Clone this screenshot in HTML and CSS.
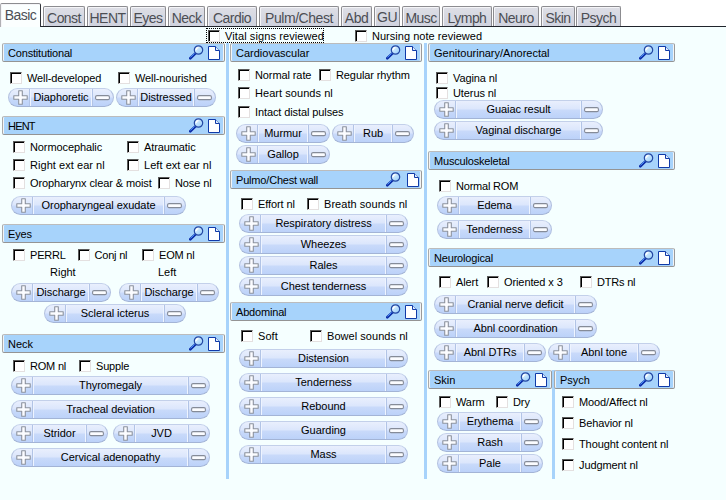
FILE: index.html
```html
<!DOCTYPE html>
<html lang="en">
<head>
<meta charset="utf-8">
<title>Physical exam</title>
<link rel="stylesheet" href="styles.css">
</head>
<body>
<svg class="defs" width="0" height="0">
  <defs>
    <linearGradient id="lens" x1="0" y1="0" x2="1" y2="1"><stop offset="0" stop-color="#f4fcff"/><stop offset="1" stop-color="#8cc8fa"/></linearGradient>
    <symbol id="find" viewBox="0 0 15 15"><path d="M1.3 13.3 6.2 8.6" stroke="#0c2ca8" stroke-width="2.6" stroke-linecap="round"/><path d="M1.5 12.4 5.6 8.4" stroke="#4a94f8" stroke-width="1"/><circle cx="9.5" cy="5" r="4.2" fill="url(#lens)" stroke="#2448a4" stroke-width="1.2"/><path d="M7.1 4.9a2.4 2.4 0 0 1 2.3-2.3" fill="none" stroke="#fff" stroke-width="1.2"/></symbol>
    <symbol id="page" viewBox="0 0 12 14"><path d="M.5.5h7l4 4v9H.5z" fill="#fff" stroke="#103aa8"/><path d="M7.5.5v4h4" fill="#dcecff" stroke="#103aa8"/></symbol>
    <symbol id="plus" viewBox="0 0 15 15"><path d="M5.7.8h3.6v4.9h4.9v3.6H9.3v4.9H5.7V9.3H.8V5.7h4.9z" fill="#fbfcff" stroke="#8c929e" stroke-width="1.1" stroke-linejoin="round"/></symbol>
    <symbol id="minus" viewBox="0 0 15 6"><rect x=".6" y=".6" width="13.8" height="4" rx="1.4" fill="#fbfcff" stroke="#858b98" stroke-width="1.1"/></symbol>
  </defs>
</svg>

<nav class="tabs">
  <a class="tab active">Basic</a><a class="tab const">Const</a><a class="tab hent">HENT</a><a class="tab eyes">Eyes</a><a class="tab neck">Neck</a><a class="tab cardio">Cardio</a><a class="tab pulm">Pulm/Chest</a><a class="tab abd">Abd</a><a class="tab gu">GU</a><a class="tab musc">Musc</a><a class="tab lymph">Lymph</a><a class="tab neuro">Neuro</a><a class="tab skin">Skin</a><a class="tab psych">Psych</a>
</nav>

<div class="review">
  <label class="check focus">Vital signs reviewed</label>
  <label class="check nursing">Nursing note reviewed</label>
</div>

<main class="exam">
  <div class="col col-a">
    <section class="s73">
      <h2 class="narrow">Constitutional<svg class="find"><use href="#find"/></svg><svg class="page"><use href="#page"/></svg></h2>
      <div class="row t10 l8 g108"><label class="check">Well-developed</label><label class="check">Well-nourished</label></div>
      <div class="row t4 l6 gap2"><div class="pill w106"><b><svg><use href="#plus"/></svg></b><span>Diaphoretic</span><b><svg><use href="#minus"/></svg></b></div><div class="pill w100"><b><svg><use href="#plus"/></svg></b><span>Distressed</span><b><svg><use href="#minus"/></svg></b></div></div>
    </section>
    <section class="s108">
      <h2 class="narrower">HENT<svg class="find"><use href="#find"/></svg><svg class="page"><use href="#page"/></svg></h2>
      <div class="row t6 l11 g114"><label class="check">Normocephalic</label><label class="check">Atraumatic</label></div>
      <div class="row t6 l11 g114"><label class="check loose">Right ext ear nl</label><label class="check loose">Left ext ear nl</label></div>
      <div class="row t6 l11 g145"><label class="check">Oropharynx clear &amp; moist</label><label class="check">Nose nl</label></div>
      <div class="row t7 l9"><div class="pill w175"><b><svg><use href="#plus"/></svg></b><span>Oropharyngeal exudate</span><b><svg><use href="#minus"/></svg></b></div></div>
    </section>
    <section class="s110">
      <h2 class="narrow">Eyes<svg class="find"><use href="#find"/></svg><svg class="page"><use href="#page"/></svg></h2>
      <div class="row t6 l11 g64"><label class="check tight">PERRL</label><label class="check tight">Conj nl</label><label class="check tight">EOM nl</label></div>
      <div class="row t5 l48 g108 sides"><span>Right</span><span>Left</span></div>
      <div class="row t5 l9 gap8"><div class="pill w100"><b><svg><use href="#plus"/></svg></b><span>Discharge</span><b><svg><use href="#minus"/></svg></b></div><div class="pill w100"><b><svg><use href="#plus"/></svg></b><span>Discharge</span><b><svg><use href="#minus"/></svg></b></div></div>
      <div class="row t2 l42"><div class="pill w142"><b><svg><use href="#plus"/></svg></b><span>Scleral icterus</span><b><svg><use href="#minus"/></svg></b></div></div>
    </section>
    <section>
      <h2>Neck<svg class="find"><use href="#find"/></svg><svg class="page"><use href="#page"/></svg></h2>
      <div class="row t7 l11 g66"><label class="check tight">ROM nl</label><label class="check tight">Supple</label></div>
      <div class="row t4 l9"><div class="pill w199"><b><svg><use href="#plus"/></svg></b><span>Thyromegaly</span><b><svg><use href="#minus"/></svg></b></div></div>
      <div class="row t5 l9"><div class="pill w199"><b><svg><use href="#plus"/></svg></b><span>Tracheal deviation</span><b><svg><use href="#minus"/></svg></b></div></div>
      <div class="row t5 l9 gap5"><div class="pill w97"><b><svg><use href="#plus"/></svg></b><span>Stridor</span><b><svg><use href="#minus"/></svg></b></div><div class="pill w97"><b><svg><use href="#plus"/></svg></b><span>JVD</span><b><svg><use href="#minus"/></svg></b></div></div>
      <div class="row t5 l9"><div class="pill w199"><b><svg><use href="#plus"/></svg></b><span>Cervical adenopathy</span><b><svg><use href="#minus"/></svg></b></div></div>
    </section>
  </div>

  <div class="col col-b">
    <section class="s127">
      <h2>Cardiovascular<svg class="find"><use href="#find"/></svg><svg class="page"><use href="#page"/></svg></h2>
      <div class="row t7 l8 g81"><label class="check">Normal rate</label><label class="check">Regular rhythm</label></div>
      <div class="row t6 l8"><label class="check loose">Heart sounds nl</label></div>
      <div class="row t7 l8"><label class="check">Intact distal pulses</label></div>
      <div class="row t6 l6 gap2"><div class="pill w94"><b><svg><use href="#plus"/></svg></b><span>Murmur</span><b><svg><use href="#minus"/></svg></b></div><div class="pill w82"><b><svg><use href="#plus"/></svg></b><span>Rub</span><b><svg><use href="#minus"/></svg></b></div></div>
      <div class="row t2 l6"><div class="pill w94"><b><svg><use href="#plus"/></svg></b><span>Gallop</span><b><svg><use href="#minus"/></svg></b></div></div>
    </section>
    <section class="s132">
      <h2 class="shifted narrow">Pulmo/Chest wall<svg class="find"><use href="#find"/></svg><svg class="page"><use href="#page"/></svg></h2>
      <div class="row t9 l11 g66"><label class="check">Effort nl</label><label class="check loose">Breath sounds nl</label></div>
      <div class="row t4 l9"><div class="pill w169"><b><svg><use href="#plus"/></svg></b><span>Respiratory distress</span><b><svg><use href="#minus"/></svg></b></div></div>
      <div class="row t2 l9"><div class="pill w169"><b><svg><use href="#plus"/></svg></b><span>Wheezes</span><b><svg><use href="#minus"/></svg></b></div></div>
      <div class="row t2 l9"><div class="pill w169"><b><svg><use href="#plus"/></svg></b><span>Rales</span><b><svg><use href="#minus"/></svg></b></div></div>
      <div class="row t2 l9"><div class="pill w169"><b><svg><use href="#plus"/></svg></b><span>Chest tenderness</span><b><svg><use href="#minus"/></svg></b></div></div>
    </section>
    <section>
      <h2 class="narrow">Abdominal<svg class="find"><use href="#find"/></svg><svg class="page"><use href="#page"/></svg></h2>
      <div class="row t9 l11 g69"><label class="check loose">Soft</label><label class="check loose">Bowel sounds nl</label></div>
      <div class="row t7 l9"><div class="pill w169"><b><svg><use href="#plus"/></svg></b><span>Distension</span><b><svg><use href="#minus"/></svg></b></div></div>
      <div class="row t5 l9"><div class="pill w169"><b><svg><use href="#plus"/></svg></b><span>Tenderness</span><b><svg><use href="#minus"/></svg></b></div></div>
      <div class="row t5 l9"><div class="pill w169"><b><svg><use href="#plus"/></svg></b><span>Rebound</span><b><svg><use href="#minus"/></svg></b></div></div>
      <div class="row t5 l9"><div class="pill w169"><b><svg><use href="#plus"/></svg></b><span>Guarding</span><b><svg><use href="#minus"/></svg></b></div></div>
      <div class="row t5 l9"><div class="pill w169"><b><svg><use href="#plus"/></svg></b><span>Mass</span><b><svg><use href="#minus"/></svg></b></div></div>
    </section>
  </div>

  <div class="col col-c">
    <section class="s108">
      <h2>Genitourinary/Anorectal<svg class="find"><use href="#find"/></svg><svg class="page"><use href="#page"/></svg></h2>
      <div class="row t10 l8"><label class="check">Vagina nl</label></div>
      <div class="row t3 l8"><label class="check">Uterus nl</label></div>
      <div class="row t1 l6"><div class="pill w169"><b><svg><use href="#plus"/></svg></b><span>Guaiac result</span><b><svg><use href="#minus"/></svg></b></div></div>
      <div class="row t2 l6"><div class="pill w169"><b><svg><use href="#plus"/></svg></b><span>Vaginal discharge</span><b><svg><use href="#minus"/></svg></b></div></div>
    </section>
    <section class="s97">
      <h2 class="narrow">Musculoskeletal<svg class="find"><use href="#find"/></svg><svg class="page"><use href="#page"/></svg></h2>
      <div class="row t10 l11"><label class="check tight">Normal ROM</label></div>
      <div class="row t4 l9"><div class="pill w115"><b><svg><use href="#plus"/></svg></b><span>Edema</span><b><svg><use href="#minus"/></svg></b></div></div>
      <div class="row t5 l9"><div class="pill w115"><b><svg><use href="#plus"/></svg></b><span>Tenderness</span><b><svg><use href="#minus"/></svg></b></div></div>
    </section>
    <section class="s122">
      <h2 class="narrow">Neurological<svg class="find"><use href="#find"/></svg><svg class="page"><use href="#page"/></svg></h2>
      <div class="row t9 l11 neuro-checks"><label class="check">Alert</label><label class="check">Oriented x 3</label><label class="check tight">DTRs nl</label></div>
      <div class="row t7 l6"><div class="pill w163"><b><svg><use href="#plus"/></svg></b><span>Cranial nerve deficit</span><b><svg><use href="#minus"/></svg></b></div></div>
      <div class="row t5 l6"><div class="pill w163"><b><svg><use href="#plus"/></svg></b><span>Abnl coordination</span><b><svg><use href="#minus"/></svg></b></div></div>
      <div class="row t5 l6 gap2"><div class="pill w112"><b><svg><use href="#plus"/></svg></b><span>Abnl DTRs</span><b><svg><use href="#minus"/></svg></b></div><div class="pill w112"><b><svg><use href="#plus"/></svg></b><span>Abnl tone</span><b><svg><use href="#minus"/></svg></b></div></div>
    </section>
    <div class="pair">
      <section class="skin-exam">
        <h2>Skin<svg class="find"><use href="#find"/></svg><svg class="page"><use href="#page"/></svg></h2>
        <div class="row t7 l11 g57"><label class="check">Warm</label><label class="check">Dry</label></div>
        <div class="row t4 l9"><div class="pill w106"><b><svg><use href="#plus"/></svg></b><span>Erythema</span><b><svg><use href="#minus"/></svg></b></div></div>
        <div class="row t2 l9"><div class="pill w106"><b><svg><use href="#plus"/></svg></b><span>Rash</span><b><svg><use href="#minus"/></svg></b></div></div>
        <div class="row t2 l9"><div class="pill w106"><b><svg><use href="#plus"/></svg></b><span>Pale</span><b><svg><use href="#minus"/></svg></b></div></div>
      </section>
      <section class="psych-exam">
        <h2>Psych<svg class="find"><use href="#find"/></svg><svg class="page"><use href="#page"/></svg></h2>
        <div class="row t7 l8"><label class="check">Mood/Affect nl</label></div>
        <div class="row t9 l8"><label class="check">Behavior nl</label></div>
        <div class="row t9 l8"><label class="check">Thought content nl</label></div>
        <div class="row t9 l8"><label class="check">Judgment nl</label></div>
      </section>
    </div>
  </div>
</main>
</body>
</html>
```

FILE: styles.css
```css
*, *::before { box-sizing: border-box; }
body {
  margin: 0;
  width: 726px;
  height: 500px;
  overflow: hidden;
  background: #f5ffff;
  color: #000;
  font: 11px/12px "Liberation Sans", Arial, sans-serif;
}
.defs { display: block; }
svg { display: block; flex: none; }

/* Tab strip */
.tabs {
  display: flex;
  align-items: flex-end;
  height: 27px;
  background: #fff;
  border-bottom: 1px solid #20242c;
}
.tab {
  height: 20px;
  padding-top: 3px;
  border: 1px solid #8c8c90;
  border-bottom: 0;
  border-radius: 2px 2px 0 0;
  box-shadow: inset 1px 1px 0 #f5f5f8;
  background: linear-gradient(#dedfe6, #cfd2de);
  color: #4c4e54;
  font-size: 14px;
  line-height: 16px;
  letter-spacing: -.55px;
  text-align: center;
  white-space: nowrap;
}
.tab.active {
  width: 41px;
  height: 24px;
  margin-bottom: -1px;
  background: #fbffff;
  border-color: #8c8c90 #303238 transparent #b0b0b4;
}
.const { width: 42px; margin-left: 2px; }
.hent { width: 41px; margin-left: 2px; }
.eyes { width: 36px; margin-left: 2px; }
.neck { width: 37px; margin-left: 2px; }
.cardio { width: 50px; margin-left: 2px; }
.pulm { width: 80px; margin-left: 2px; letter-spacing: -.45px; }
.abd { width: 31px; margin-left: 2px; }
.gu { width: 26px; margin-left: 2px; padding-top: 2px; }
.musc { width: 38px; margin-left: 2px; }
.lymph { width: 50px; margin-left: 2px; }
.neuro { width: 46px; margin-left: 1px; }
.skin { width: 34px; margin-left: 2px; }
.psych { width: 45px; margin-left: 1px; }

/* Review line */
.review { display: flex; height: 16px; padding: 1px 0 0 206px; }
.review .check { height: 15px; padding-top: 2px; letter-spacing: .03px; }
.review .focus { width: 118px; padding: 1px; border: 1px dotted #000; letter-spacing: .1px; }
.review .nursing { margin-left: 31px; }

/* Check boxes */
.check {
  display: flex;
  height: 12px;
  white-space: nowrap;
  letter-spacing: -.1px;
}
.check::before {
  content: "";
  flex: none;
  width: 12px;
  height: 12px;
  margin-right: 5px;
  background: #fff;
  border: 1px solid;
  border-color: #5a5a5a #e4e0e0 #e4e0e0 #5a5a5a;
  box-shadow: inset 1px 1px 0 #000;
}
.check.tight { letter-spacing: -.2px; }
.check.loose { letter-spacing: .05px; }

/* Columns */
.exam { display: flex; height: 436px; }
.col { height: 436px; }
.col-a { width: 229px; padding-left: 2px; border-right: 3px solid #a7d3fb; }
.col-a h2 { width: 223px; }
.col-b { width: 198px; padding-left: 1px; border-right: 3px solid #a7d3fb; }
.col-b h2 { width: 192px; }
.col-c { width: 249px; padding-left: 1px; }
.col-c h2 { width: 247px; }
.pair { display: flex; height: 109px; }
.skin-exam { width: 127px; border-right: 3px solid #a7d3fb; }
.col-c .skin-exam h2 { width: 124px; }
.psych-exam { width: 121px; margin-left: -1px; }
.col-c .psych-exam h2 { width: 121px; }
.s73 { height: 73px; }
.s97 { height: 97px; }
.s108 { height: 108px; }
.s110 { height: 110px; }
.s122 { height: 122px; }
.s127 { height: 127px; }
.s132 { height: 132px; }

/* Section headings */
h2 {
  display: flex;
  height: 19px;
  margin: 0;
  padding: 3px 3px 0 5px;
  border: 1px solid;
  border-color: #bcbcbc #9a9a9a #949494 #aaa;
  border-radius: 2px;
  box-shadow: inset 1px 0 0 #f4f4f4, inset -1px 0 0 #f4f4f4;
  background: #a7d3fb;
  font-size: 11px;
  font-weight: 400;
  line-height: 12px;
}
.narrow { letter-spacing: -.18px; }
.narrower { letter-spacing: -.8px; }
.find { width: 15px; height: 15px; margin: -2px 4px 0 auto; }
.page { width: 12px; height: 14px; margin: -1px 1px 0 0; }
.shifted .find { margin-right: 6px; }
.shifted .page { margin-right: -1px; }

/* Rows */
.row { display: grid; grid-auto-flow: column; justify-content: start; }
.g57 { grid-auto-columns: 57px; }
.g64 { grid-auto-columns: 64.5px; }
.g66 { grid-auto-columns: 66px; }
.g69 { grid-auto-columns: 69px; }
.g81 { grid-auto-columns: 81px; }
.g108 { grid-auto-columns: 108px; }
.g114 { grid-auto-columns: 114px; }
.g145 { grid-auto-columns: 145px; }
.neuro-checks { grid-template-columns: 48px 93px 70px; }
.gap2 { column-gap: 2px; }
.gap5 { column-gap: 5px; }
.gap8 { column-gap: 8px; }
.t1 { margin-top: 1px; }
.t2 { margin-top: 2px; }
.t3 { margin-top: 3px; }
.t4 { margin-top: 4px; }
.t5 { margin-top: 5px; }
.t6 { margin-top: 6px; }
.t7 { margin-top: 7px; }
.t9 { margin-top: 9px; }
.t10 { margin-top: 10px; }
.l6 { margin-left: 6px; }
.l8 { margin-left: 8px; }
.l9 { margin-left: 9px; }
.l11 { margin-left: 11px; }
.l42 { margin-left: 42px; }
.l48 { margin-left: 48px; }

/* Plus / minus finding buttons */
.pill {
  display: flex;
  height: 19px;
  border: 1px solid;
  border-color: #c3d0ea #b0bfdf #a3b4d6 #b4c2e0;
  border-radius: 10px;
  background: linear-gradient(#e9effd 0%, #dbe6fc 48%, #c9dafa 52%, #bcd2f9 100%);
  overflow: hidden;
}
.pill b { display: flex; flex: none; width: 20px; align-items: center; justify-content: center; }
.pill span {
  flex: 1;
  padding-top: 2px;
  line-height: 13px;
  text-align: center;
  white-space: nowrap;
  letter-spacing: -.05px;
  border: solid #b2c4e6;
  border-width: 0 1px;
  box-shadow: inset 1px 0 0 #eef4ff, inset -1px 0 0 #eef4ff;
}
.pill b:first-child svg { width: 15px; height: 15px; margin-left: 2px; }
.pill b:last-child svg { width: 15px; height: 6px; margin: 1px 2px 0 0; }
.w82 { width: 82px; }
.w94 { width: 94px; }
.w97 { width: 97px; }
.w100 { width: 100px; }
.w106 { width: 106px; }
.w112 { width: 112px; }
.w115 { width: 115px; }
.w142 { width: 142px; }
.w163 { width: 163px; }
.w169 { width: 169px; }
.w175 { width: 175px; }
.w199 { width: 199px; }
```
